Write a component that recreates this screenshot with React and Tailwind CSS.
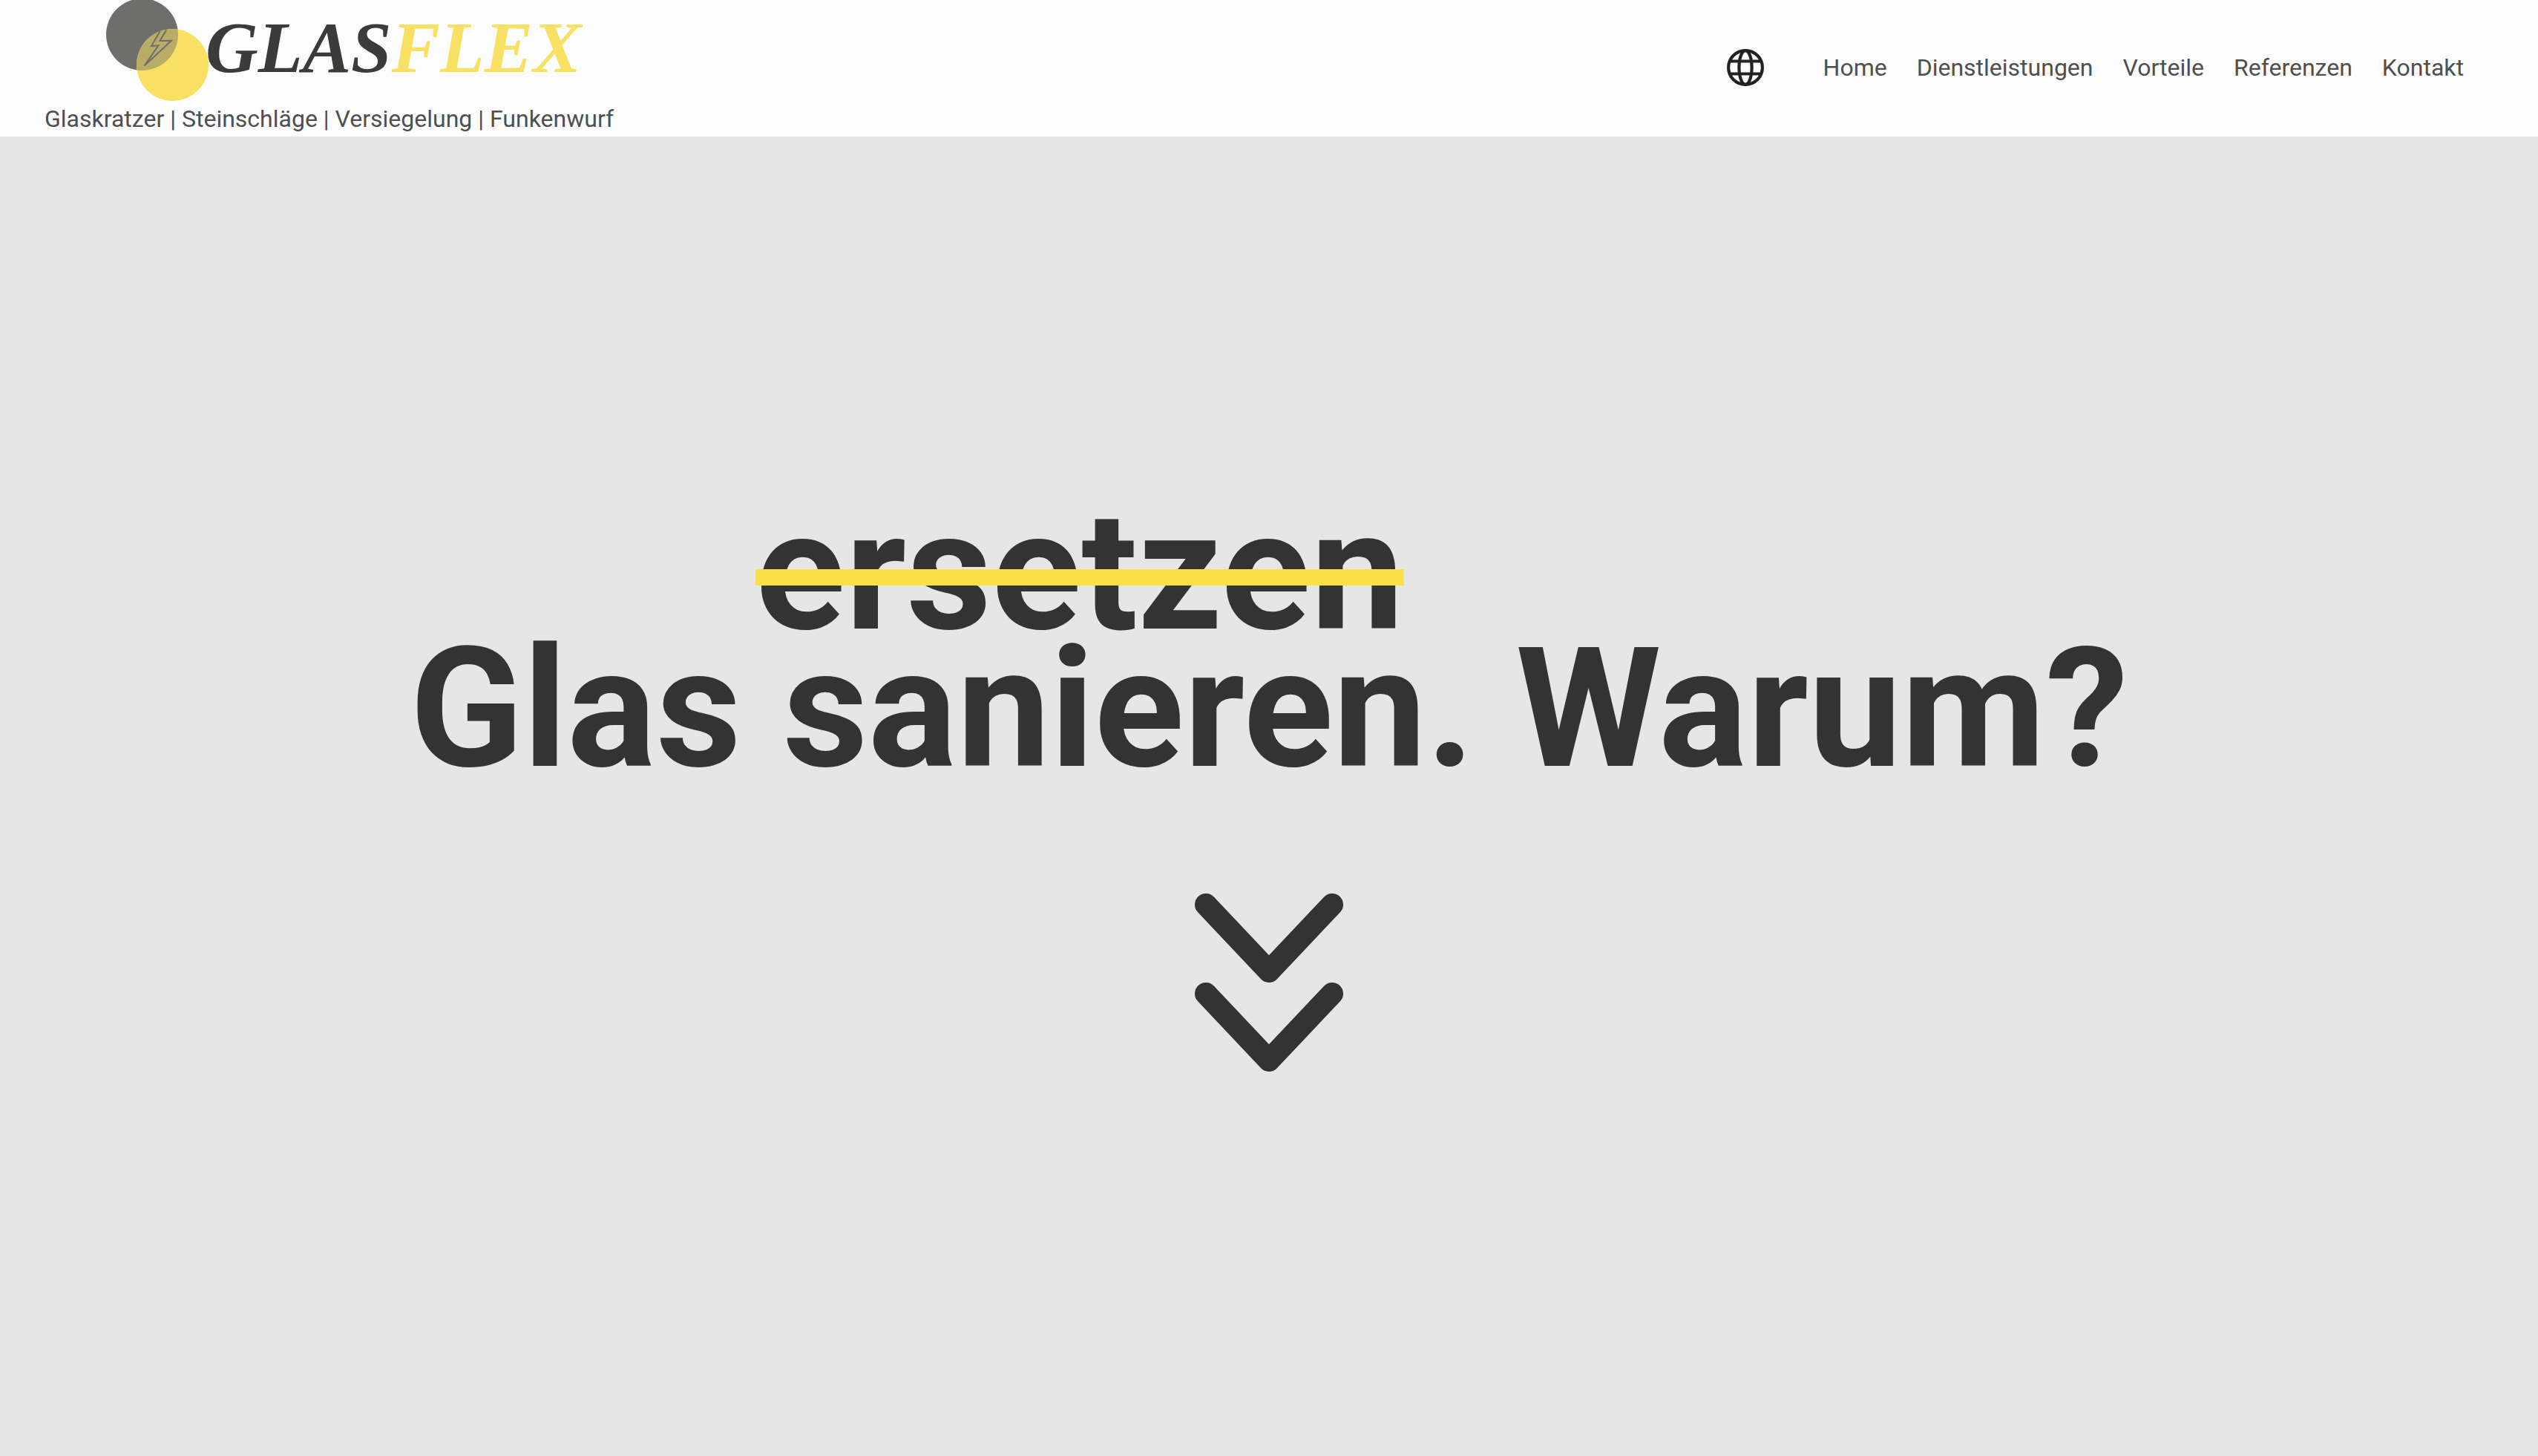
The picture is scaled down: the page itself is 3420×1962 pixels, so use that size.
const links = ["Home", "Dienstleistungen", "Vorteile", "Referenzen", "Kontakt"];

function Logo() {
  return (
    <svg viewBox="60 0 768 140" className="block h-[140px] w-[768px]" role="img" aria-label="Glasflex">
      <circle cx="191.5" cy="46.5" r="48.5" fill="#6e6e6c" />
      <circle cx="232.5" cy="87.5" r="48.5" fill="#f8e063" />
      <clipPath id="lens">
        <circle cx="191.5" cy="46.5" r="48.5" />
      </clipPath>
      <circle cx="232.5" cy="87.5" r="48.5" fill="#b9ac66" clipPath="url(#lens)" />
      <path
        d="M216 41.5L204 62L213.5 61.3L194.5 88.5L231 54.8L215.5 55L224 40.5"
        fill="none"
        stroke="#6e6e6c"
        strokeWidth="2"
      />
      <text x="277" y="97" fontSize="98" fontWeight="700" fontStyle="italic" fontFamily="Liberation Serif, Times New Roman, serif" fill="#3b3b39">
        GLAS<tspan fill="#f8e063">FLEX</tspan>
      </text>
    </svg>
  );
}

function Globe() {
  return (
    <svg viewBox="0 0 50 50" className="block size-[50px]" fill="none" stroke="#222" strokeWidth="4.2" aria-hidden="true">
      <circle cx="25" cy="25" r="22.9" />
      <ellipse cx="25" cy="25" rx="8.6" ry="22.9" />
      <path d="M3.5 16.5H46.5M3.5 33.5H46.5" />
    </svg>
  );
}

export default function App() {
  return (
    <div className="flex min-h-screen flex-col bg-[#e6e6e6] font-['Roboto',sans-serif] text-[#333]">
      <header className="flex items-center justify-between bg-[#fcfcfc] pl-[60px] pr-[100px] text-[32px] leading-[40px] text-[#4f4f4f]">
        <a href="#home" className="block pb-1">
          <Logo />
          <p>Glaskratzer | Steinschläge | Versiegelung | Funkenwurf</p>
        </a>
        <div className="flex items-center gap-20 pb-0.5">
          <button type="button" aria-label="Sprache">
            <Globe />
          </button>
          <nav className="flex gap-10">
            {links.map((label) => (
              <a key={label} href={"#" + label.toLowerCase()}>
                {label}
              </a>
            ))}
          </nav>
        </div>
      </header>
      <main className="flex grow flex-col items-center justify-center gap-[156px] pb-6">
        <h1 className="text-center text-[224px] font-bold leading-[185px]">
          <span className="block pr-[510px]">
            <s className="line-through decoration-[#fbdf49] decoration-[22px]">ersetzen</s>
          </span>
          <span className="block">Glas sanieren. Warum?</span>
        </h1>
        <a href="#warum" aria-label="Weiter nach unten">
          <svg viewBox="0 0 200 240" className="block h-[240px] w-[200px]" fill="none" stroke="#333" strokeWidth="30" strokeLinecap="round" strokeLinejoin="round">
            <path d="M15 15L100 105L185 15M15 135L100 225L185 135" />
          </svg>
        </a>
      </main>
    </div>
  );
}
